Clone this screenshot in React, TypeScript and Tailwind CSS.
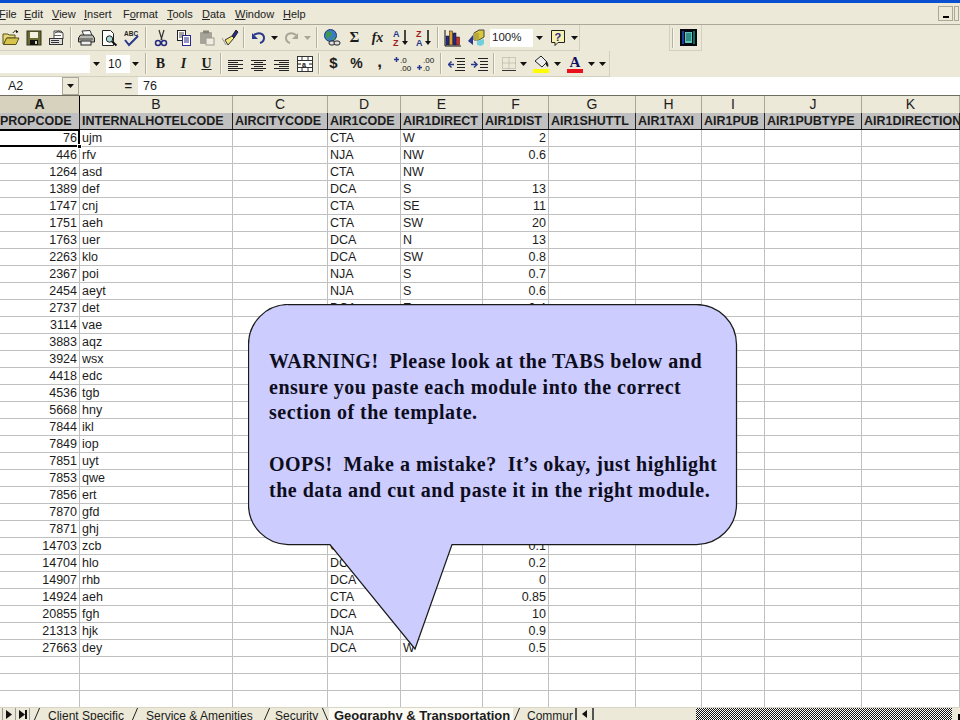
import type { ReactNode } from "react";

const menus = [
  { pre: "", key: "F", post: "ile", w: "w-[25px]" },
  { pre: "", key: "E", post: "dit", w: "w-[28px]" },
  { pre: "", key: "V", post: "iew", w: "w-[32px]" },
  { pre: "", key: "I", post: "nsert", w: "w-[39px]" },
  { pre: "F", key: "o", post: "rmat", w: "w-[44px]" },
  { pre: "", key: "T", post: "ools", w: "w-[35px]" },
  { pre: "", key: "D", post: "ata", w: "w-[33px]" },
  { pre: "", key: "W", post: "indow", w: "w-[48px]" },
  { pre: "", key: "H", post: "elp", w: "w-[30px]" },
];

const columns = [
  { id: "A", name: "PROPCODE", w: "w-[80px]" },
  { id: "B", name: "INTERNALHOTELCODE", w: "w-[153px]" },
  { id: "C", name: "AIRCITYCODE", w: "w-[95px]" },
  { id: "D", name: "AIR1CODE", w: "w-[73px]" },
  { id: "E", name: "AIR1DIRECT", w: "w-[82px]" },
  { id: "F", name: "AIR1DIST", w: "w-[66px]" },
  { id: "G", name: "AIR1SHUTTL", w: "w-[87px]" },
  { id: "H", name: "AIR1TAXI", w: "w-[66px]" },
  { id: "I", name: "AIR1PUB", w: "w-[63px]" },
  { id: "J", name: "AIR1PUBTYPE", w: "w-[97px]" },
  { id: "K", name: "AIR1DIRECTION", w: "w-[98px]" },
];

// A, B, D, E, F - the other columns are empty
const rows = [
  ["76", "ujm", "CTA", "W", "2"],
  ["446", "rfv", "NJA", "NW", "0.6"],
  ["1264", "asd", "CTA", "NW", ""],
  ["1389", "def", "DCA", "S", "13"],
  ["1747", "cnj", "CTA", "SE", "11"],
  ["1751", "aeh", "CTA", "SW", "20"],
  ["1763", "uer", "DCA", "N", "13"],
  ["2263", "klo", "DCA", "SW", "0.8"],
  ["2367", "poi", "NJA", "S", "0.7"],
  ["2454", "aeyt", "NJA", "S", "0.6"],
  ["2737", "det", "DCA", "E", "0.4"],
  ["3114", "vae", "", "", ""],
  ["3883", "aqz", "", "", ""],
  ["3924", "wsx", "", "", ""],
  ["4418", "edc", "", "", ""],
  ["4536", "tgb", "", "", ""],
  ["5668", "hny", "", "", ""],
  ["7844", "ikl", "", "", ""],
  ["7849", "iop", "", "", ""],
  ["7851", "uyt", "", "", ""],
  ["7853", "qwe", "", "", ""],
  ["7856", "ert", "", "", ""],
  ["7870", "gfd", "", "", ""],
  ["7871", "ghj", "", "", ""],
  ["14703", "zcb", "CTA", "", "0.1"],
  ["14704", "hlo", "DCA", "", "0.2"],
  ["14907", "rhb", "DCA", "", "0"],
  ["14924", "aeh", "CTA", "", "0.85"],
  ["20855", "fgh", "DCA", "", "10"],
  ["21313", "hjk", "NJA", "", "0.9"],
  ["27663", "dey", "DCA", "W", "0.5"],
  ["", "", "", "", ""],
  ["", "", "", "", ""],
  ["", "", "", "", ""],
];

const cellValue = (row: string[], j: number) => {
  if (j === 0) return row[0];
  if (j === 1) return row[1];
  if (j === 3) return row[2];
  if (j === 4) return row[3];
  if (j === 5) return row[4];
  return "";
};

function Tool({ children, w = "w-[23px]" }: { children?: ReactNode; w?: string }) {
  return <div className={`flex h-full shrink-0 items-center justify-center ${w}`}>{children}</div>;
}

function Sep({ w = "w-[6px]" }: { w?: string }) {
  return (
    <div className={`flex h-full shrink-0 items-center justify-center ${w}`}>
      <div className="h-[21px] w-[2px] border-l border-[#b5b2a0] bg-[#f8f7f0]" />
    </div>
  );
}

function Caret({ w = "w-[9px]", muted }: { w?: string; muted?: boolean }) {
  return (
    <Tool w={w}>
      <svg width="7" height="4" viewBox="0 0 7 4">
        <path d="M0 0h7L3.5 4z" fill={muted ? "#a8a698" : "#111"} />
      </svg>
    </Tool>
  );
}

function Icon({ children }: { children: ReactNode }) {
  return (
    <svg width="18" height="18" viewBox="0 0 18 18">
      {children}
    </svg>
  );
}

const OpenIcon = () => (
  <Icon>
    <path d="M1 5h5l1 1h6v3H5L2 15H1z" fill="#e8d878" stroke="#54501c" />
    <path d="M4.500 9H17l-3 6.500H1.500z" fill="#d8c44c" stroke="#54501c" />
    <path d="M11 4c1-2 3-3 5-1" fill="none" stroke="#111" />
    <path d="M14 1l2.500 2L14 4z" fill="#111" />
  </Icon>
);
const SaveIcon = () => (
  <Icon>
    <rect x="2" y="2" width="14" height="14" fill="#6a6a34" stroke="#33331a" />
    <rect x="5" y="3" width="8" height="6" fill="#f2f0df" />
    <rect x="5" y="11" width="8" height="5" fill="#111" />
    <rect x="10" y="12" width="2" height="3" fill="#d8d8c0" />
  </Icon>
);
const MailIcon = () => (
  <Icon>
    <path d="M6 2h7l2 2v6H6z" fill="#fff" stroke="#444" />
    <path d="M7 4l3.500-2L14 4" fill="#a0a0a0" stroke="#444" />
    <rect x="1.500" y="9.500" width="13" height="6" fill="#ddd" stroke="#333" />
    <path d="M3 11.500h8M3 13.500h8" stroke="#333" />
    <rect x="6" y="6" width="7" height="1" fill="#666" />
  </Icon>
);
const PrintIcon = () => (
  <Icon>
    <path d="M5 2l8-0.500 2 5H7z" fill="#fff" stroke="#333" />
    <path d="M1.500 9l2-3h12l2 3v4h-16z" fill="#b8b8b0" stroke="#222" />
    <rect x="4" y="12" width="10" height="4" fill="#eee" stroke="#222" />
    <path d="M2 10h14" stroke="#444" />
  </Icon>
);
const PreviewIcon = () => (
  <Icon>
    <path d="M2.500 1.500h8l3 3v12h-11z" fill="#fff" stroke="#222" />
    <circle cx="9.500" cy="10" r="3.200" fill="#a8d8d8" stroke="#222" />
    <path d="M12 12.500l4.500 4" stroke="#111" strokeWidth="2" />
  </Icon>
);
const SpellIcon = () => (
  <Icon>
    <text x="1" y="7" fontFamily="Liberation Sans" fontSize="6.500" fontWeight="700" fill="#222">ABC</text>
    <path d="M2 11l4 5 9-9" fill="none" stroke="#28388c" strokeWidth="2" />
  </Icon>
);
const CutIcon = () => (
  <Icon>
    <path d="M7 1l3 10M12 1l-3 10" stroke="#333" strokeWidth="1.200" />
    <circle cx="6" cy="14" r="2.500" fill="none" stroke="#222a80" strokeWidth="1.500" />
    <circle cx="12" cy="14" r="2.500" fill="none" stroke="#222a80" strokeWidth="1.500" />
  </Icon>
);
const CopyIcon = () => (
  <Icon>
    <rect x="2.500" y="1.500" width="8" height="10" fill="#fff" stroke="#222" />
    <path d="M4 4h5M4 6h5M4 8h5" stroke="#444" />
    <rect x="7.500" y="6.500" width="8" height="10" fill="#fff" stroke="#28288c" />
    <path d="M9 9h5M9 11h5M9 13h5" stroke="#28288c" />
  </Icon>
);
const PasteIcon = () => (
  <Icon>
    <rect x="2" y="3" width="12" height="12" rx="1" fill="#a6a498" />
    <rect x="5" y="1.500" width="6" height="3" fill="#86847a" />
    <rect x="8" y="9" width="8" height="7" fill="#efede0" stroke="#9c9a8e" />
  </Icon>
);
const BrushIcon = () => (
  <Icon>
    <path d="M11 7l-7 4 3 5 6-7z" fill="#f2e67c" stroke="#333" />
    <path d="M11 7l2 2 4-6-2-2z" fill="#28288c" stroke="#222" />
    <path d="M1 9l4 7" stroke="#999" />
  </Icon>
);
const UndoIcon = ({ muted }: { muted?: boolean }) => (
  <svg width="16" height="12" viewBox="0 0 16 12" className={muted ? "-scale-x-100" : ""}>
    <path d="M3 3c4-3 10-2 10 3 0 2-1 4-4 5" fill="none" stroke={muted ? "#a8a698" : "#28388c"} strokeWidth="2" />
    <path d="M1 1v6h6z" fill={muted ? "#a8a698" : "#28388c"} />
  </svg>
);
const GlobeIcon = () => (
  <Icon>
    <circle cx="7.500" cy="6.500" r="6" fill="#3c7cc8" stroke="#1c3c70" />
    <path d="M4 2l4 1 1 3-3 2-1 3-2-4z" fill="#3c9c48" />
    <path d="M9 9l3-1 0 2-2 1z" fill="#3c9c48" />
    <rect x="6" y="12" width="6" height="4" rx="2" fill="#ddd" stroke="#222" />
    <rect x="11" y="12" width="6" height="4" rx="2" fill="#ddd" stroke="#222" />
  </Icon>
);
const Sort = ({ top, bottom, topColor, bottomColor }: { top: string; bottom: string; topColor: string; bottomColor: string }) => (
  <Icon>
    <text x="1" y="8" fontFamily="Liberation Sans" fontSize="9" fontWeight="700" fill={topColor}>{top}</text>
    <text x="1" y="17" fontFamily="Liberation Sans" fontSize="9" fontWeight="700" fill={bottomColor}>{bottom}</text>
    <path d="M13 1v13" stroke="#111" strokeWidth="1.500" />
    <path d="M10 12h6l-3 4z" fill="#111" />
  </Icon>
);
const ChartIcon = () => (
  <Icon>
    <rect x="2" y="7" width="3" height="9" fill="#28288c" stroke="#111" strokeWidth=".5" />
    <rect x="5.500" y="2" width="3" height="14" fill="#e0a028" stroke="#111" strokeWidth=".5" />
    <rect x="9" y="4" width="3" height="12" fill="#28288c" stroke="#111" strokeWidth=".5" />
    <rect x="12.500" y="8" width="3" height="8" fill="#d82828" stroke="#111" strokeWidth=".5" />
    <path d="M1 1v16h16" fill="none" stroke="#111" />
  </Icon>
);
const MapIcon = () => (
  <Icon>
    <path d="M7 4l5-3h5v7l-5 3H7z" fill="#d8c83c" stroke="#444" />
    <path d="M7 4h5v7H7z" fill="#b8a838" />
    <path d="M1 12l5-6v10z" fill="#28388c" />
    <path d="M10 12l7-2v5l-3 2-4-1z" fill="#70d0e0" />
  </Icon>
);
const HelpIcon = () => (
  <Icon>
    <path d="M2.500 1.500h13v12H9l-3 3v-3H2.500z" fill="#f8f0b0" stroke="#222" />
    <text x="5.500" y="11.500" fontFamily="Liberation Sans" fontSize="11" fontWeight="700" fill="#28288c">?</text>
  </Icon>
);
const AlignIcon = ({ kind }: { kind: "left" | "center" | "right" }) => {
  const lines = [3, 5, 7, 9, 11, 13];
  return (
    <svg width="15" height="14" viewBox="0 0 15 14">
      {lines.map((y, i) => {
        const short = i % 2 === 1;
        const x1 = !short ? 0 : kind === "left" ? 0 : kind === "center" ? 3 : 5;
        const x2 = !short ? 15 : kind === "left" ? 10 : kind === "center" ? 12 : 15;
        return <path key={y} d={`M${x1} ${y + 0.5}H${x2}`} stroke="#222" />;
      })}
    </svg>
  );
};
const MergeIcon = () => (
  <Icon>
    <rect x="1.500" y="1.500" width="15" height="15" fill="#fff" stroke="#333" />
    <path d="M1.500 5.500h15M1.500 12.500h15M6 1.500v4M12 1.500v4M6 12.500v4M12 12.500v4" stroke="#333" />
    <text x="6" y="11.500" fontFamily="Liberation Sans" fontSize="7" fontWeight="700" fill="#111">a</text>
    <path d="M2 9h3M16 9h-3" stroke="#111" />
  </Icon>
);
const DecimalIcon = ({ more }: { more?: boolean }) => (
  <svg width="20" height="16" viewBox="0 0 20 16">
    <text x="7" y="7" fontFamily="Liberation Sans" fontSize="8" fill="#111">{more ? ".0" : ".00"}</text>
    <text x="7" y="15" fontFamily="Liberation Sans" fontSize="8" fill="#111">{more ? ".00" : ".0"}</text>
    <path d={more ? "M1 3.500h5" : "M1 11.500h5"} stroke="#28388c" strokeWidth="1.500" />
    <path d={more ? "M3.500 1v5" : "M3.500 9v5"} stroke="#28388c" strokeWidth="1.500" />
  </svg>
);
const IndentIcon = ({ out }: { out?: boolean }) => (
  <Icon>
    <path d="M7 3.500h10M9 6.500h8M9 9.500h8M9 12.500h8M7 15.500h10" stroke="#222" />
    <path d={out ? "M1 9.500h5" : "M0 9.500h5"} stroke="#28388c" strokeWidth="1.500" />
    <path d={out ? "M3.500 6.500L0.500 9.500l3 3" : "M3 6.500l3 3-3 3"} fill="none" stroke="#28388c" strokeWidth="1.500" />
  </Icon>
);
const BorderIcon = () => (
  <Icon>
    <path d="M2.500 2.500h13v11h-13zM9 2.500v11M2.500 8h13" fill="none" stroke="#a8a698" strokeDasharray="1 1" />
    <path d="M2 15.500h14" stroke="#333" />
  </Icon>
);
const FillIcon = () => (
  <svg width="18" height="20" viewBox="0 0 18 20">
    <path d="M3 7l6-5 6 6-5 5z" fill="#eee" stroke="#222" />
    <path d="M14 7c2 1 3 4 2 6-2-1-3-3-2-6z" fill="#222" />
    <rect x="1" y="15" width="16" height="4" fill="#ffff00" />
  </svg>
);
const ColorIcon = () => (
  <svg width="18" height="20" viewBox="0 0 18 20">
    <text x="9" y="13" textAnchor="middle" fontFamily="Liberation Serif" fontWeight="700" fontSize="15" fill="#101060">A</text>
    <rect x="1" y="15" width="16" height="4" fill="#e8101c" />
  </svg>
);
const ScriptIcon = () => (
  <svg width="17" height="17" viewBox="0 0 17 17">
    <rect width="17" height="17" fill="#06060e" />
    <rect x="2" y="2" width="2" height="13" fill="#1c3ca0" />
    <rect x="13" y="2" width="2" height="13" fill="#0c7060" />
    <rect x="5" y="3" width="7" height="11" fill="#5cc8b8" />
    <path d="M6 5h5M6 7h5M6 9h5M6 11h5" stroke="#0c4c58" />
  </svg>
);

function TabSlash({ back }: { back?: boolean }) {
  return (
    <svg width="8" height="14" viewBox="0 0 8 14" className="shrink-0">
      <path d={back ? "M1 0l6 14" : "M7 0L1 14"} stroke="#222" fill="none" />
    </svg>
  );
}

export default function App() {
  return (
    <div className="relative h-[720px] w-[960px] overflow-hidden bg-white font-['Liberation_Sans',sans-serif] text-[12.5px] text-[#1c1c1c]">
      <div className="h-[3px] bg-[#0a4fd0]" />

      <div className="flex h-[22px] items-center border-b border-[#aca899] bg-[#ece9d8] pr-[1px] text-[11px] text-[#222]">
        <div className="-ml-[1px] flex pt-[1px]">
          {menus.map((m) => (
            <div key={m.key + m.post} className={m.w}>
              {m.pre}
              <span className="underline">{m.key}</span>
              {m.post}
            </div>
          ))}
        </div>
        <div className="ml-auto flex items-center gap-[1px]">
          <div className="flex h-[15px] w-[15px] items-end justify-center border border-[#aca899] bg-[#ece9d8] pb-[2px]">
            <div className="h-[2px] w-[6px] bg-black" />
          </div>
          <div className="h-[15px] w-[5px] border border-[#aca899] bg-[#ece9d8]" />
        </div>
      </div>

      <div className="flex h-[26px] items-center bg-[#ece9d8]">
        <div className="-ml-[1px] flex h-full items-center border-r border-b border-[#d4d0bf]">
          <Tool><OpenIcon /></Tool>
          <Tool><SaveIcon /></Tool>
          <Tool><MailIcon /></Tool>
          <Sep />
          <Tool><PrintIcon /></Tool>
          <Tool><PreviewIcon /></Tool>
          <Tool><SpellIcon /></Tool>
          <Sep />
          <Tool><CutIcon /></Tool>
          <Tool><CopyIcon /></Tool>
          <Tool><PasteIcon /></Tool>
          <Tool><BrushIcon /></Tool>
          <Sep />
          <Tool><UndoIcon /></Tool>
          <Caret />
          <Tool><UndoIcon muted /></Tool>
          <Caret w="w-[11px]" muted />
          <Sep w="w-[7px]" />
          <Tool><GlobeIcon /></Tool>
          <Tool><span className="font-['Liberation_Serif',serif] text-[15px] font-bold">Σ</span></Tool>
          <Tool><span className="font-['Liberation_Serif',serif] text-[14px] font-bold italic">fx</span></Tool>
          <Tool><Sort top="A" bottom="Z" topColor="#28388c" bottomColor="#a01c1c" /></Tool>
          <Tool><Sort top="Z" bottom="A" topColor="#a01c1c" bottomColor="#28388c" /></Tool>
          <Sep />
          <Tool><ChartIcon /></Tool>
          <Tool><MapIcon /></Tool>
          <div className="ml-[3px] flex h-[18px] w-[43px] items-center bg-white pl-[2px] text-[11.5px]">100%</div>
          <Caret w="w-[12px]" />
          <Tool w="w-[25px]"><HelpIcon /></Tool>
          <Caret w="w-[9px]" />
        </div>
        <div className="ml-[89px] flex h-full w-[33px] items-center border-x border-b border-[#d4d0bf] pl-[2px]">
          <div className="h-[20px] w-[2px] border-l border-[#b5b2a0] bg-[#f8f7f0]" />
          <div className="ml-[6px]"><ScriptIcon /></div>
        </div>
      </div>

      <div className="flex h-[26px] items-center bg-[#ece9d8]">
        <div className="flex h-full items-center border-r border-b border-[#d4d0bf]">
          <div className="h-[18px] w-[90px] bg-white" />
          <Caret w="w-[13px]" />
          <div className="w-[3px]" />
          <div className="flex h-[18px] w-[24px] items-center bg-white pl-[2px] text-[12px]">10</div>
          <Caret w="w-[11px]" />
          <div className="w-[2px]" />
          <Sep />
          <Tool><span className="font-['Liberation_Serif',serif] text-[14px] font-bold">B</span></Tool>
          <Tool><span className="font-['Liberation_Serif',serif] text-[14px] font-bold italic">I</span></Tool>
          <Tool><span className="font-['Liberation_Serif',serif] text-[14px] font-bold underline">U</span></Tool>
          <Sep />
          <Tool><AlignIcon kind="left" /></Tool>
          <Tool><AlignIcon kind="center" /></Tool>
          <Tool><AlignIcon kind="right" /></Tool>
          <Tool><MergeIcon /></Tool>
          <Sep />
          <Tool><span className="text-[15px] font-bold">$</span></Tool>
          <Tool><span className="text-[14px] font-bold">%</span></Tool>
          <Tool><span className="-mt-[3px] text-[17px] font-bold">,</span></Tool>
          <Tool><DecimalIcon more /></Tool>
          <Tool><DecimalIcon /></Tool>
          <Sep w="w-[8px]" />
          <Tool><IndentIcon out /></Tool>
          <Tool><IndentIcon /></Tool>
          <Sep />
          <Tool><BorderIcon /></Tool>
          <Caret w="w-[7px]" />
          <div className="w-[2px]" />
          <Tool w="w-[24px]"><FillIcon /></Tool>
          <Caret w="w-[8px]" />
          <div className="w-[2px]" />
          <Tool w="w-[24px]"><ColorIcon /></Tool>
          <Caret w="w-[8px]" />
          <Caret w="w-[14px]" />
        </div>
      </div>

      <div className="flex h-[18px] items-stretch bg-[#ece9d8]">
        <div className="flex w-[62px] items-center bg-white pl-[8px]">A2</div>
        <div className="flex w-[17px] items-center justify-center border border-[#aca899] bg-[#ece9d8]">
          <svg width="7" height="4" viewBox="0 0 7 4"><path d="M0 0h7L3.500 4z" fill="#111" /></svg>
        </div>
        <div className="flex w-[59px] items-center justify-end pr-[6px] text-[13px] font-bold">=</div>
        <div className="flex flex-1 items-center bg-white pl-[5px]">76</div>
      </div>

      <div className="flex h-[18px] border-t border-[#6f6d60] bg-[#ece9d8] text-[14px]">
        {columns.map((c) => (
          <div
            key={c.id}
            className={`flex shrink-0 items-center justify-center border-r border-[#aca899] ${c.w} ${c.id === "A" ? "border-r-black bg-[#d6d2bd] font-bold" : ""}`}
          >
            {c.id}
          </div>
        ))}
      </div>

      <div className="flex h-[17px] border-b border-[#111] bg-[#c0c0c0] font-bold">
        {columns.map((c) => (
          <div
            key={c.id}
            className={`flex shrink-0 items-center overflow-hidden whitespace-nowrap border-r border-[#222] ${c.w} ${c.id === "A" ? "pl-0" : "pl-[2px]"}`}
          >
            {c.name}
          </div>
        ))}
      </div>

      <div>
        {rows.map((row, i) => (
          <div key={i} className="flex h-[17px] border-b border-[#c0c0c0]">
            {columns.map((c, j) => (
              <div
                key={c.id}
                className={`flex shrink-0 items-center whitespace-nowrap border-r border-[#c0c0c0] pt-[1px] ${c.w} ${j === 0 || j === 5 ? "justify-end pr-[2px]" : "pl-[2px]"}`}
              >
                {cellValue(row, j)}
              </div>
            ))}
          </div>
        ))}
      </div>

      <div className="absolute left-0 top-[129px] h-[18px] w-[80px] border-2 border-l-0 border-black" />
      <div className="absolute left-[77px] top-[144px] h-[5px] w-[5px] border border-white bg-black" />

      <div className="absolute inset-x-0 bottom-0 flex h-[13px] items-center overflow-hidden border-t border-[#d8d5c4] bg-[#ece9d8] text-[12px]">
        <div className="flex h-full w-[33px] items-center pl-[2px]">
          <span className="flex h-full w-[14px] items-center justify-center border-x border-[#999]">
            <svg width="6" height="9" viewBox="0 0 6 9"><path d="M0 0l6 4.500L0 9z" fill="#111" /></svg>
          </span>
          <span className="flex h-full w-[14px] items-center justify-center border-r border-[#999]">
            <svg width="8" height="9" viewBox="0 0 8 9"><path d="M0 0l6 4.500L0 9zM6 0h2v9H6z" fill="#111" /></svg>
          </span>
        </div>
        <TabSlash />
        <div className="w-[90px] shrink-0 whitespace-nowrap pl-[7px] pt-[4px]">Client Specific</div>
        <TabSlash />
        <div className="w-[124px] shrink-0 whitespace-nowrap pl-[7px] pt-[4px]">Service &amp; Amenities</div>
        <TabSlash />
        <div className="w-[50px] shrink-0 whitespace-nowrap pl-[4px] pt-[4px]">Security</div>
        <TabSlash back />
        <div className="h-full w-[184px] shrink-0 whitespace-nowrap bg-[#fbfaf4] pl-[5px] pt-[1px] text-[13px] leading-[13px] font-bold">Geography &amp; Transportation</div>
        <TabSlash />
        <div className="w-[54px] shrink-0 overflow-hidden whitespace-nowrap pl-[6px] pt-[4px]">Commur</div>
        <span className="flex h-full w-[19px] shrink-0 items-center justify-center border-x-2 border-[#555]">
          <svg width="5" height="8" viewBox="0 0 5 8"><path d="M5 0L0 4l5 4z" fill="#111" /></svg>
        </span>
        <div className="flex-1" />
        <div className="h-full w-[256px] bg-[repeating-conic-gradient(#111_0%_25%,#fff_0%_50%)] bg-[length:2px_2px]" />
        <div className="flex h-full w-[8px] items-end justify-end">
          <div className="h-[6px] w-[2px] bg-black" />
        </div>
      </div>

      <div className="absolute left-[248px] top-[304px] h-[350px] w-[490px]">
        <svg className="absolute inset-0" width="490" height="350" viewBox="0 0 490 350">
          <path
            d="M40 .5H448.500A40 40 0 0 1 488.500 40.500V200.500A40 40 0 0 1 448.500 240.500H204L167 345L82 240.500H40A40 40 0 0 1 .5 200.500V40.500A40 40 0 0 1 40 .5Z"
            fill="#ccccff"
            stroke="#1a1a1a"
            strokeWidth="1.250"
          />
        </svg>
        <div className="relative whitespace-pre pl-[21px] pt-[45px] font-['Liberation_Serif',serif] text-[20px] font-bold leading-[25.7px] tracking-[0.5px] text-[#0d0d1c]">
          <div>WARNING!  Please look at the TABS below and</div>
          <div>ensure you paste each module into the correct</div>
          <div>section of the template.</div>
          <div>&nbsp;</div>
          <div>OOPS!  Make a mistake?  It’s okay, just highlight</div>
          <div>the data and cut and paste it in the right module.</div>
        </div>
      </div>
    </div>
  );
}
